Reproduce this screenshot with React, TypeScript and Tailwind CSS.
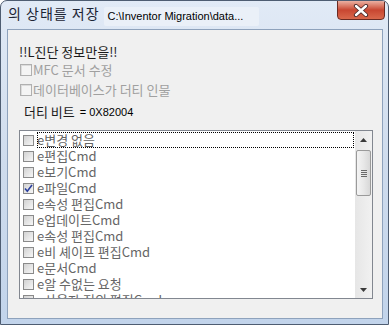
import React from 'react';

const items = [
  { label: 'e변경 없음', checked: false, focus: true },
  { label: 'e편집Cmd', checked: false },
  { label: 'e보기Cmd', checked: false },
  { label: 'e파일Cmd', checked: true },
  { label: 'e속성 편집Cmd', checked: false },
  { label: 'e업데이트Cmd', checked: false },
  { label: 'e속성 편집Cmd', checked: false },
  { label: 'e비 셰이프 편집Cmd', checked: false },
  { label: 'e문서Cmd', checked: false },
  { label: 'e알 수없는 요청', checked: false },
  { label: 'e사용자 정의 편집Cmd', checked: false },
];

function ListCheck({ checked }: { checked?: boolean }) {
  return (
    <div className="relative w-[11px] h-[11px] shrink-0 border border-[#8a8a8a] bg-linear-to-br from-[#d2d2d2] to-[#f7f7f7]">
      {checked && (
        <svg className="absolute -left-px -top-px" width="11" height="11" viewBox="0 0 11 11">
          <path d="M2 5.5 L4.3 8.2 L9 2" fill="none" stroke="#2a3f9e" strokeWidth="1.6" />
        </svg>
      )}
    </div>
  );
}

export default function App() {
  const cjk = "font-['Noto_Sans_CJK_KR','Liberation_Sans',sans-serif]";

  return (
    <div className="w-[391px] h-[327px] bg-white">
      <div className="w-[389px] h-[325px] flex flex-col border border-[#4e5d72] rounded-t-[7px] bg-linear-to-b from-[#e1eaf6] via-[#cfdced] to-[#c2d4eb] overflow-hidden">
        {/* Title bar */}
        <div className="h-[28px] flex items-start pl-[7px] shrink-0">
          <span className={`${cjk} text-[14px] leading-[18px] pt-[3px] text-[#1c2433] tracking-[1px]`}>의 상태를 저장</span>
          <div className="ml-[4px] mt-[6px] w-[155px] h-[19px] bg-[#eaf0f8] rounded-[2px] pl-[4px] font-['Liberation_Sans',Arial,sans-serif] text-[11px] leading-[19px] text-black whitespace-nowrap overflow-hidden">
            C:\Inventor Migration\data...
          </div>
          <div className="ml-auto mr-[3px] -mt-px w-[48px] h-[20px] rounded-b-[4px] border border-[#6a2a22] bg-linear-to-b from-[#eab0a2] via-[#c84631] to-[#d9684c] flex items-center justify-center">
            <svg width="16" height="13" viewBox="0 0 16 13">
              <path d="M3 2 L13 11 M13 2 L3 11" stroke="#4a2a2a" strokeWidth="4.2" strokeLinecap="round" />
              <path d="M3 2 L13 11 M13 2 L3 11" stroke="#ffffff" strokeWidth="2.4" strokeLinecap="round" />
            </svg>
          </div>
        </div>

        {/* Client area */}
        <div className="ml-[6px] mr-[5px] mb-[5px] flex-1 border border-[#8ea2bc] bg-[#f0f0f0] flex flex-col">
          <div className={`${cjk} text-[13px] leading-[16px] text-[#1a1a1a] ml-[11px] mt-[14px]`}>!!L진단 정보만을!!</div>

          <div className="flex items-center h-[16px] mt-[2px] ml-[12px]">
            <div className="w-[12px] h-[12px] border border-[#b0b0b0] bg-[#f4f4f4] shadow-[inset_1px_1px_0_#dcdcdc]" />
            <span className={`${cjk} text-[13px] leading-[16px] text-[#a0a0a0] ml-px`}>MFC 문서 수정</span>
          </div>
          <div className="flex items-center h-[16px] mt-[4px] ml-[12px]">
            <div className="w-[12px] h-[12px] border border-[#b0b0b0] bg-[#f4f4f4] shadow-[inset_1px_1px_0_#dcdcdc]" />
            <span className={`${cjk} text-[13px] leading-[16px] text-[#a0a0a0] ml-px`}>데이터베이스가 더티 인물</span>
          </div>

          <div className="flex items-center h-[16px] mt-[6px] ml-[16px]">
            <span className={`${cjk} text-[13px] leading-[16px] text-[#1a1a1a]`}>더티 비트</span>
            <span className="font-['Liberation_Sans',Arial,sans-serif] text-[11px] text-black ml-[5px]">= 0X82004</span>
          </div>

          {/* Check list */}
          <div className="ml-[11px] mt-[10px] w-[354px] h-[169px] border border-[#828790] bg-white flex overflow-hidden">
            <div className="flex-1 pt-px overflow-hidden">
              {items.map((item, i) => (
                <div key={i} className="h-[16px] flex items-center pl-[3px]">
                  <ListCheck checked={item.checked} />
                  <div
                    className={`ml-[3px] flex-1 mr-px h-[16px] ${cjk} text-[13px] leading-[16px] text-[#666666] whitespace-nowrap ${
                      item.focus ? 'outline-1 -outline-offset-1 outline-dotted outline-black' : ''
                    }`}
                  >
                    {item.label}
                  </div>
                </div>
              ))}
            </div>

            {/* Scrollbar */}
            <div className="w-[17px] h-full bg-linear-to-r from-[#e6e6e6] to-[#f1f1f1] flex flex-col">
              <div className="h-[17px] flex items-center justify-center">
                <svg width="7" height="4" viewBox="0 0 7 4">
                  <path d="M0 4 L3.5 0 L7 4 Z" fill="#3a3a3a" />
                </svg>
              </div>
              <div className="mx-px mt-[2px] h-[46px] rounded-[2px] border border-[#9a9a9a] bg-linear-to-r from-[#f4f4f4] via-[#e8e8e8] to-[#d8d8d8] flex flex-col items-center justify-center gap-px">
                <div className="w-[6px] h-px bg-[#6a6a6a]" />
                <div className="w-[6px] h-px bg-[#6a6a6a]" />
                <div className="w-[6px] h-px bg-[#6a6a6a]" />
                <div className="w-[6px] h-px bg-[#6a6a6a]" />
              </div>
              <div className="flex-1" />
              <div className="h-[17px] flex items-center justify-center">
                <svg width="7" height="4" viewBox="0 0 7 4">
                  <path d="M0 0 L3.5 4 L7 0 Z" fill="#3a3a3a" />
                </svg>
              </div>
            </div>
          </div>
        </div>
      </div>
    </div>
  );
}
